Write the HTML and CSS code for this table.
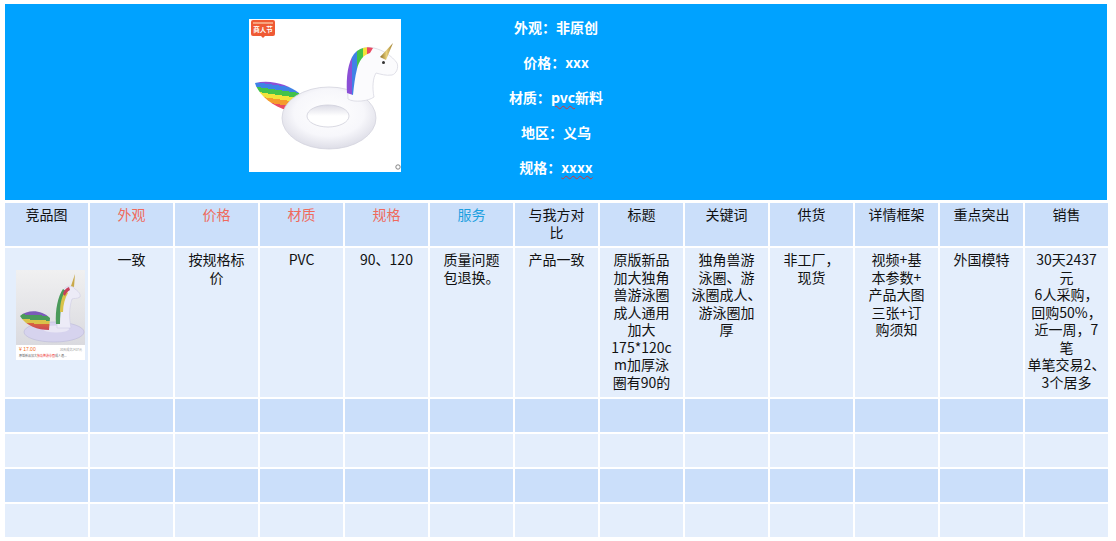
FILE: index.html
```html
<!DOCTYPE html>
<html lang="zh-CN">
<head>
<meta charset="utf-8">
<title>竞品分析</title>
<link rel="stylesheet" href="styles.css">
</head>
<body>
<section class="banner">
  <div class="banner-pic">
    <svg width="152" height="153" viewBox="0 0 152 153" xmlns="http://www.w3.org/2000/svg">
      <defs>
        <radialGradient id="ringG" cx="0.5" cy="0.42" r="0.62">
          <stop offset="0" stop-color="#ffffff"/>
          <stop offset="0.6" stop-color="#f7f7fb"/>
          <stop offset="0.9" stop-color="#e0e0e9"/>
          <stop offset="1" stop-color="#d2d2de"/>
        </radialGradient>
        <linearGradient id="holeG" x1="0" y1="0" x2="0" y2="1">
          <stop offset="0" stop-color="#dcdce6"/>
          <stop offset="0.5" stop-color="#ffffff"/>
          <stop offset="1" stop-color="#ffffff"/>
        </linearGradient>
        <linearGradient id="tailG" x1="0.6" y1="0" x2="0.35" y2="1">
          <stop offset="0" stop-color="#8b4fd6"/>
          <stop offset="0.15" stop-color="#8b4fd6"/>
          <stop offset="0.15" stop-color="#3f82e6"/>
          <stop offset="0.3" stop-color="#3f82e6"/>
          <stop offset="0.3" stop-color="#43c24a"/>
          <stop offset="0.46" stop-color="#43c24a"/>
          <stop offset="0.46" stop-color="#f2e33a"/>
          <stop offset="0.6" stop-color="#f2e33a"/>
          <stop offset="0.6" stop-color="#f59b2c"/>
          <stop offset="0.76" stop-color="#f59b2c"/>
          <stop offset="0.76" stop-color="#ea4a62"/>
          <stop offset="1" stop-color="#ea4a62"/>
        </linearGradient>
        <linearGradient id="maneG" x1="0" y1="0" x2="1" y2="0">
          <stop offset="0" stop-color="#8b4fd6"/>
          <stop offset="0.2" stop-color="#8b4fd6"/>
          <stop offset="0.2" stop-color="#3f82e6"/>
          <stop offset="0.4" stop-color="#3f82e6"/>
          <stop offset="0.4" stop-color="#43c24a"/>
          <stop offset="0.6" stop-color="#43c24a"/>
          <stop offset="0.6" stop-color="#f2e33a"/>
          <stop offset="0.78" stop-color="#f2e33a"/>
          <stop offset="0.78" stop-color="#ea4a62"/>
          <stop offset="1" stop-color="#ea4a62"/>
        </linearGradient>
        <linearGradient id="hornG" x1="0" y1="0" x2="1" y2="0">
          <stop offset="0" stop-color="#8a6a22"/>
          <stop offset="0.5" stop-color="#e7cf7a"/>
          <stop offset="1" stop-color="#9c7a2a"/>
        </linearGradient>
      </defs>
      <rect width="152" height="153" fill="#ffffff"/>
      <rect x="2" y="1" width="24" height="16" rx="2" fill="#ef5a34"/>
      <rect x="4" y="3" width="20" height="2" fill="#f7a37f"/>
      <text x="14" y="13" font-size="6.5" font-weight="bold" fill="#fff" text-anchor="middle" font-family="Noto Sans CJK SC, sans-serif">商人节</text>
      <path d="M12 17 L14 19 L16 17 Z" fill="#ef5a34"/>
      <path d="M50 74 C40 66 22 60 6 64 C8 72 18 84 34 90 C44 93 52 92 56 88 Z" fill="url(#tailG)"/>
      <ellipse cx="80" cy="99" rx="47" ry="31" fill="url(#ringG)" stroke="#d4d4de" stroke-width="0.8"/>
      <ellipse cx="79" cy="97" rx="21" ry="11" fill="url(#holeG)" stroke="#cfcfda" stroke-width="0.8"/>
      <path d="M99 80 C98 62 99 46 105 36 C109 30 117 27 125 29 C134 31 143 37 148 44 C150 49 147 55 143 56 C137 57 131 55 127 54 C124 59 123 68 125 78 C120 82 105 84 99 80 Z" fill="#fbfbfd" stroke="#d8d8e2" stroke-width="0.8"/>
      <path d="M98 74 C97 58 99 43 105 35 C110 29 117 27 124 29 L121 34 C114 36 110 42 108 50 C106 58 105 66 104 76 Z" fill="url(#maneG)"/>
      <path d="M131 38 L144 24 L137 41 Z" fill="url(#hornG)"/>
      <circle cx="134.5" cy="43.5" r="1.5" fill="#333"/>
      <circle cx="149" cy="148" r="2.2" fill="none" stroke="#777" stroke-width="0.9"/>
    </svg>
  </div>
  <div class="banner-info">
    <p>外观：非原创</p>
    <p>价格：xxx</p>
    <p>材质：<span class="spell">pvc</span>新料</p>
    <p>地区：义乌</p>
    <p>规格：<span class="spell">xxxx</span></p>
  </div>
  <div class="banner-rest"></div>
</section>

<section class="grid">
  <div class="cell head">竞品图</div>
  <div class="cell head red">外观</div>
  <div class="cell head red">价格</div>
  <div class="cell head red">材质</div>
  <div class="cell head red">规格</div>
  <div class="cell head blue">服务</div>
  <div class="cell head">与我方对<br>比</div>
  <div class="cell head">标题</div>
  <div class="cell head">关键词</div>
  <div class="cell head">供货</div>
  <div class="cell head">详情框架</div>
  <div class="cell head">重点突出</div>
  <div class="cell head">销售</div>

  <div class="cell light thumb-cell">
    <svg class="thumb" width="69" height="90" viewBox="0 0 69 90" xmlns="http://www.w3.org/2000/svg">
      <defs>
        <linearGradient id="bgT" x1="0" y1="0" x2="0" y2="1">
          <stop offset="0" stop-color="#f0f0f1"/>
          <stop offset="1" stop-color="#dadadf"/>
        </linearGradient>
        <linearGradient id="tailT" x1="0.5" y1="0" x2="0.4" y2="1">
          <stop offset="0" stop-color="#7a5bb8"/>
          <stop offset="0.2" stop-color="#7a5bb8"/>
          <stop offset="0.2" stop-color="#4a9a5a"/>
          <stop offset="0.45" stop-color="#4a9a5a"/>
          <stop offset="0.45" stop-color="#d9c24a"/>
          <stop offset="0.65" stop-color="#d9c24a"/>
          <stop offset="0.65" stop-color="#d8643e"/>
          <stop offset="1" stop-color="#c8405a"/>
        </linearGradient>
      </defs>
      <rect width="69" height="90" fill="#ffffff"/>
      <rect width="69" height="75" fill="url(#bgT)"/>
      <ellipse cx="38" cy="62" rx="30" ry="10" fill="#d6d3ee" stroke="#bbb8d8" stroke-width="0.6"/>
      <ellipse cx="40" cy="59" rx="13" ry="3.5" fill="#e9e7f5"/>
      <path d="M4 46 C12 39 26 40 34 48 L33 60 C22 60 10 56 4 46 Z" fill="url(#tailT)"/>
      <path d="M41 58 C41 44 42 28 47 20 C51 15 56 15 59 19 C62 21 65 24 64 27 C61 29 58 28 56 29 C53 38 53 48 55 58 Z" fill="#ecebf7" stroke="#c9c6e0" stroke-width="0.5"/>
      <path d="M40 54 C39 40 42 26 47 19 L50 21 C46 28 44 40 44 54 Z" fill="#4a9a5a"/>
      <path d="M44 42 C44 33 46 25 50 21 L52 23 C49 28 47 35 47 42 Z" fill="#d9c24a"/>
      <path d="M47 24 C48 20 50 18 53 17 L54 20 C52 21 50 23 49 26 Z" fill="#c8405a"/>
      <path d="M55 16 L59 4 L58 17 Z" fill="#c9a94a"/>
      <text x="3" y="81" font-size="5" fill="#f26a1b" font-family="Liberation Sans, sans-serif">¥ 17.00</text>
      <text x="66" y="81" font-size="3" fill="#999" text-anchor="end" font-family="Noto Sans CJK SC, sans-serif">30天成交2437元</text>
      <text x="3" y="87" font-size="3" fill="#666" font-family="Noto Sans CJK SC, sans-serif">原版新品加大<tspan fill="#e33">独角兽游泳圈</tspan>成人通...</text>
    </svg>
  </div>
  <div class="cell light">一致</div>
  <div class="cell light">按规格标<br>价</div>
  <div class="cell light">PVC</div>
  <div class="cell light">90、120</div>
  <div class="cell light">质量问题<br>包退换。</div>
  <div class="cell light">产品一致</div>
  <div class="cell light">原版新品<br>加大独角<br>兽游泳圈<br>成人通用<br>加大<br>175*120c<br>m加厚泳<br>圈有90的</div>
  <div class="cell light">独角兽游<br>泳圈、游<br>泳圈成人、<br>游泳圈加<br>厚</div>
  <div class="cell light">非工厂，<br>现货</div>
  <div class="cell light">视频+基<br>本参数+<br>产品大图<br>三张+订<br>购须知</div>
  <div class="cell light">外国模特</div>
  <div class="cell light">30天2437<br>元<br>6人采购，<br>回购50%，<br>近一周，7<br>笔<br>单笔交易2、<br>3个居多</div>

  <div class="cell dark"></div><div class="cell dark"></div><div class="cell dark"></div><div class="cell dark"></div><div class="cell dark"></div><div class="cell dark"></div><div class="cell dark"></div><div class="cell dark"></div><div class="cell dark"></div><div class="cell dark"></div><div class="cell dark"></div><div class="cell dark"></div><div class="cell dark"></div>

  <div class="cell light"></div><div class="cell light"></div><div class="cell light"></div><div class="cell light"></div><div class="cell light"></div><div class="cell light"></div><div class="cell light"></div><div class="cell light"></div><div class="cell light"></div><div class="cell light"></div><div class="cell light"></div><div class="cell light"></div><div class="cell light"></div>

  <div class="cell dark"></div><div class="cell dark"></div><div class="cell dark"></div><div class="cell dark"></div><div class="cell dark"></div><div class="cell dark"></div><div class="cell dark"></div><div class="cell dark"></div><div class="cell dark"></div><div class="cell dark"></div><div class="cell dark"></div><div class="cell dark"></div><div class="cell dark"></div>

  <div class="cell light"></div><div class="cell light"></div><div class="cell light"></div><div class="cell light"></div><div class="cell light"></div><div class="cell light"></div><div class="cell light"></div><div class="cell light"></div><div class="cell light"></div><div class="cell light"></div><div class="cell light"></div><div class="cell light"></div><div class="cell light"></div>
</section>
</body>
</html>
```

FILE: styles.css
```css
html, body {
  margin: 0;
  padding: 0;
  background: #ffffff;
}

body {
  font-family: "Noto Sans CJK SC", "Noto Sans", sans-serif;
  color: #111;
  width: 1116px;
  height: 541px;
  overflow: hidden;
}

.banner {
  margin: 4px 0 0 5px;
  width: 1102px;
  height: 196px;
  background: #00a2ff;
  display: grid;
  grid-template-columns: 1fr 200px 1fr;
}

.banner-pic {
  display: flex;
  justify-content: flex-end;
  padding: 15px 55px 0 0;
}

.banner-pic svg {
  display: block;
}

.banner-info {
  padding-top: 6px;
  text-align: center;
  color: #ffffff;
  font-weight: bold;
  font-size: 14px;
}

.banner-info p {
  margin: 0;
  line-height: 35px;
}

.spell {
  text-decoration: underline wavy #e0342c;
  text-decoration-thickness: 1px;
  text-underline-offset: 2px;
}

.grid {
  margin: 3px 0 0 5px;
  width: 1103px;
  display: grid;
  grid-template-columns: repeat(13, 1fr);
  grid-template-rows: 43px 149px 33px 33px 33px 33px;
  gap: 2px;
}

.cell {
  padding: 3px 2px 0;
  text-align: center;
  font-size: 14px;
  line-height: 17.5px;
  white-space: nowrap;
  color: #111;
}

.head,
.dark {
  background: #cbdffa;
}

.light {
  background: #e4eefc;
}

.red {
  color: #ef6a5c;
}

.blue {
  color: #1d9fe0;
}

.thumb-cell {
  display: flex;
  justify-content: center;
  padding: 22px 0 0 8px;
}

.thumb {
  display: block;
}
```
